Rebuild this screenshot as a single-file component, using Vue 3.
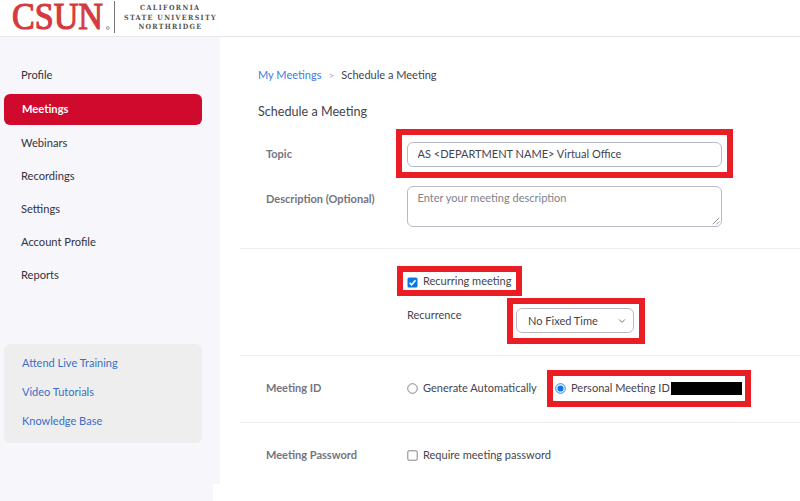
<script setup>
import { ref } from 'vue'

const nav = ['Profile', 'Meetings', 'Webinars', 'Recordings', 'Settings', 'Account Profile', 'Reports']
const active = 'Meetings'
const help = ['Attend Live Training', 'Video Tutorials', 'Knowledge Base']
const topic = ref('AS <DEPARTMENT NAME> Virtual Office')
</script>

<template>
  <div class="page">
    <header class="header">
      <div class="logo">
        <svg class="wordmark" width="99" height="36" viewBox="0 0 99 36">
          <text class="letters" x="0" y="29.4" textLength="91" lengthAdjust="spacingAndGlyphs">CSUN</text>
          <circle cx="95.8" cy="28" r="1.5" fill="none" stroke="#999" stroke-width=".9" />
          <circle cx="95.8" cy="28" r=".6" fill="#999" />
        </svg>
        <span class="bar"></span>
        <svg class="campus" width="94" height="36" viewBox="0 0 94 36">
          <text x="16" y="10.4" textLength="59">CALIFORNIA</text>
          <text x="0" y="19.8" textLength="91.5">STATE UNIVERSITY</text>
          <text x="14.5" y="29.1" textLength="62.5">NORTHRIDGE</text>
        </svg>
      </div>
    </header>

    <div class="body">
      <aside class="sidebar">
        <nav class="nav">
          <a v-for="item in nav" :key="item" class="item" :class="{ active: item === active }">{{ item }}</a>
        </nav>
        <div class="help">
          <a v-for="item in help" :key="item">{{ item }}</a>
        </div>
      </aside>

      <main class="main">
        <div class="crumbs">
          <a>My Meetings</a><span class="sep">&gt;</span><span>Schedule a Meeting</span>
        </div>
        <h1>Schedule a Meeting</h1>

        <section class="row topic">
          <label>Topic</label>
          <div class="marked mark-topic"><input v-model="topic" class="field" type="text" /></div>
        </section>
        <section class="row description">
          <label>Description (Optional)</label>
          <div class="area">
            <span>Enter your meeting description</span>
            <svg class="grip" width="8" height="8" viewBox="0 0 8 8"><path d="M.8 7.2 7.2.8M4.4 7.4l3-3" /></svg>
          </div>
        </section>

        <section class="row recurring">
          <div class="content">
            <div class="marked mark-recurring option">
              <svg class="box" width="11" height="11" viewBox="0 0 11 11">
                <rect x=".5" y=".5" width="10" height="10" rx="1.5" fill="#0b76e8" />
                <path d="M2.6 5.8l2 2L8.5 3.2" fill="none" stroke="#fff" stroke-width="1.5" />
              </svg>
              <span>Recurring meeting</span>
            </div>
            <div class="recurrence">
              <span class="caption">Recurrence</span>
              <div class="marked mark-select select">
                <span>No Fixed Time</span>
                <svg width="8" height="6" viewBox="0 0 8 6"><path d="M1 1.4l3 3 3-3" fill="none" stroke="#747487" stroke-width="1" /></svg>
              </div>
            </div>
          </div>
        </section>

        <section class="row ids">
          <label>Meeting ID</label>
          <div class="option auto">
            <svg class="box" width="11" height="11" viewBox="0 0 11 11">
              <circle cx="5.5" cy="5.5" r="4.8" fill="#fff" stroke="#767676" stroke-width=".9" />
            </svg>
            <span>Generate Automatically</span>
          </div>
          <div class="marked mark-id option">
            <svg class="box" width="11" height="11" viewBox="0 0 11 11">
              <circle cx="5.5" cy="5.5" r="4.8" fill="#fff" stroke="#0b76e8" stroke-width=".9" />
              <circle cx="5.5" cy="5.5" r="3.1" fill="#0b76e8" />
            </svg>
            <span class="pmi">Personal Meeting ID</span>
            <span class="redacted"></span>
          </div>
        </section>

        <section class="row password">
          <label>Meeting Password</label>
          <div class="option">
            <svg class="box" width="11" height="11" viewBox="0 0 11 11">
              <rect x=".8" y=".8" width="9.4" height="9.4" rx="1.2" fill="#fff" stroke="#767676" stroke-width=".9" />
            </svg>
            <span>Require meeting password</span>
          </div>
        </section>
      </main>
    </div>
  </div>
</template>

<style>
body {
  margin: 0;
  background: #fff;
}
</style>

<style scoped>
*,
*::after {
  box-sizing: border-box;
}
.page {
  width: 800px;
  height: 501px;
  display: flex;
  flex-direction: column;
  overflow: hidden;
  font: 11.03px/16px Lato, "Liberation Sans", sans-serif;
  color: #44444f;
}
.header {
  flex: 0 0 37px;
  border-bottom: 1px solid #e6e6ea;
}
.logo {
  display: flex;
  padding-left: 12px;
}
.logo svg {
  display: block;
  overflow: visible;
}
.letters {
  font: 37px "Liberation Serif", serif;
  fill: #d63a40;
  stroke: #d63a40;
  stroke-width: 1.2px;
}
.bar {
  width: 1px;
  height: 32px;
  margin: 1px 9px 0 3px;
  background: #777;
}
.campus text {
  font: bold 7.1px "DejaVu Serif Condensed", "DejaVu Serif", serif;
  fill: #555;
}
.body {
  flex: 1;
  display: flex;
}
.sidebar {
  flex: 0 0 220px;
  padding: 21.5px 18px 0 4px;
  background: #f6f6fb;
  clip-path: polygon(0 0, 100% 0, 100% 447px, 213px 447px, 213px 100%, 0 100%);
}
.nav {
  display: flex;
  flex-direction: column;
}
.item {
  height: 33px;
  padding: 9px 17px;
  color: #333340;
  font-size: 11.15px;
}
.item:first-child {
  height: 35.5px;
  padding-top: 8.5px;
}
.item.active {
  height: 31px;
  margin-bottom: 1px;
  padding: 7px 18px;
  border-radius: 6px;
  background: #cf0a2c;
  color: #fff;
  font-weight: bold;
}
.help {
  display: flex;
  flex-direction: column;
  gap: 13px;
  height: 99.5px;
  margin-top: 52.5px;
  padding: 11px 18px;
  border-radius: 6px;
  background: #eee;
  color: #3a6fc9;
}
.main {
  flex: 1;
  margin-left: 20px;
}
.crumbs {
  display: flex;
  padding: 30px 0 0 18px;
}
.crumbs a {
  color: #3b7de0;
}
.sep {
  margin: 0 7px;
  color: #aaa;
  font-size: 10px;
}
h1 {
  margin: 20px 0 0 18px;
  font-size: 12.6px;
  line-height: 18px;
  font-weight: normal;
}
.row {
  display: flex;
}
.row label {
  flex: 0 0 141px;
  margin-left: 26px;
  color: #747481;
  font-weight: bold;
}
.marked {
  position: relative;
}
.marked::after {
  content: "";
  position: absolute;
  border: 6px solid #ea1c24;
}
.topic {
  height: 44px;
  margin-top: 21px;
}
.topic label {
  padding-top: 4px;
}
.mark-topic {
  width: 315px;
  height: 25px;
}
.mark-topic::after {
  inset: -13px -11px -11px -11px;
}
.field {
  display: block;
  width: 315px;
  height: 25px;
  padding: 0 9.5px 2px;
  border: 1px solid #b9b9c8;
  border-radius: 6px;
  outline: 0;
  background: #fff;
  color: inherit;
  font: inherit;
}
.description {
  height: 62px;
}
.description label {
  padding-top: 5px;
}
.area {
  position: relative;
  width: 315px;
  height: 41px;
  padding: 3px 9.5px;
  border: 1px solid #b9b9c8;
  border-radius: 6px;
  color: #82828b;
}
.grip {
  position: absolute;
  right: 1px;
  bottom: 1px;
  fill: none;
  stroke: #777;
  stroke-width: .8;
}
.recurring,
.ids,
.password {
  border-top: 1px solid #ededf0;
}
.recurring {
  height: 107px;
}
.content {
  padding: 24px 0 0 167px;
}
.option {
  display: flex;
  height: 16px;
}
.box {
  flex: none;
  margin: 3px 5px 0 0;
}
.mark-recurring .box {
  margin-top: 4px;
}
.mark-recurring::after {
  left: -10px;
  top: -7px;
  width: 125px;
  height: 30px;
}
.recurrence {
  display: flex;
  margin-top: 18px;
}
.caption {
  width: 109px;
}
.select {
  display: flex;
  align-items: center;
  justify-content: space-between;
  width: 118px;
  height: 25px;
  margin-top: 1px;
  padding: 0 7px 0 11px;
  border: 1px solid #b9b9c8;
  border-radius: 6px;
}
.mark-select::after {
  inset: -11px -12px -12px -10px;
}
.ids {
  height: 67px;
  padding-top: 24px;
}
.auto {
  width: 148px;
}
.mark-id::after {
  left: -8px;
  top: -10px;
  width: 204px;
  height: 37px;
}
.pmi {
  width: 100px;
  white-space: nowrap;
}
.redacted {
  width: 71px;
  height: 13px;
  margin: 2px 0 0;
  background: #000;
}
.password {
  padding-top: 24px;
}
</style>
